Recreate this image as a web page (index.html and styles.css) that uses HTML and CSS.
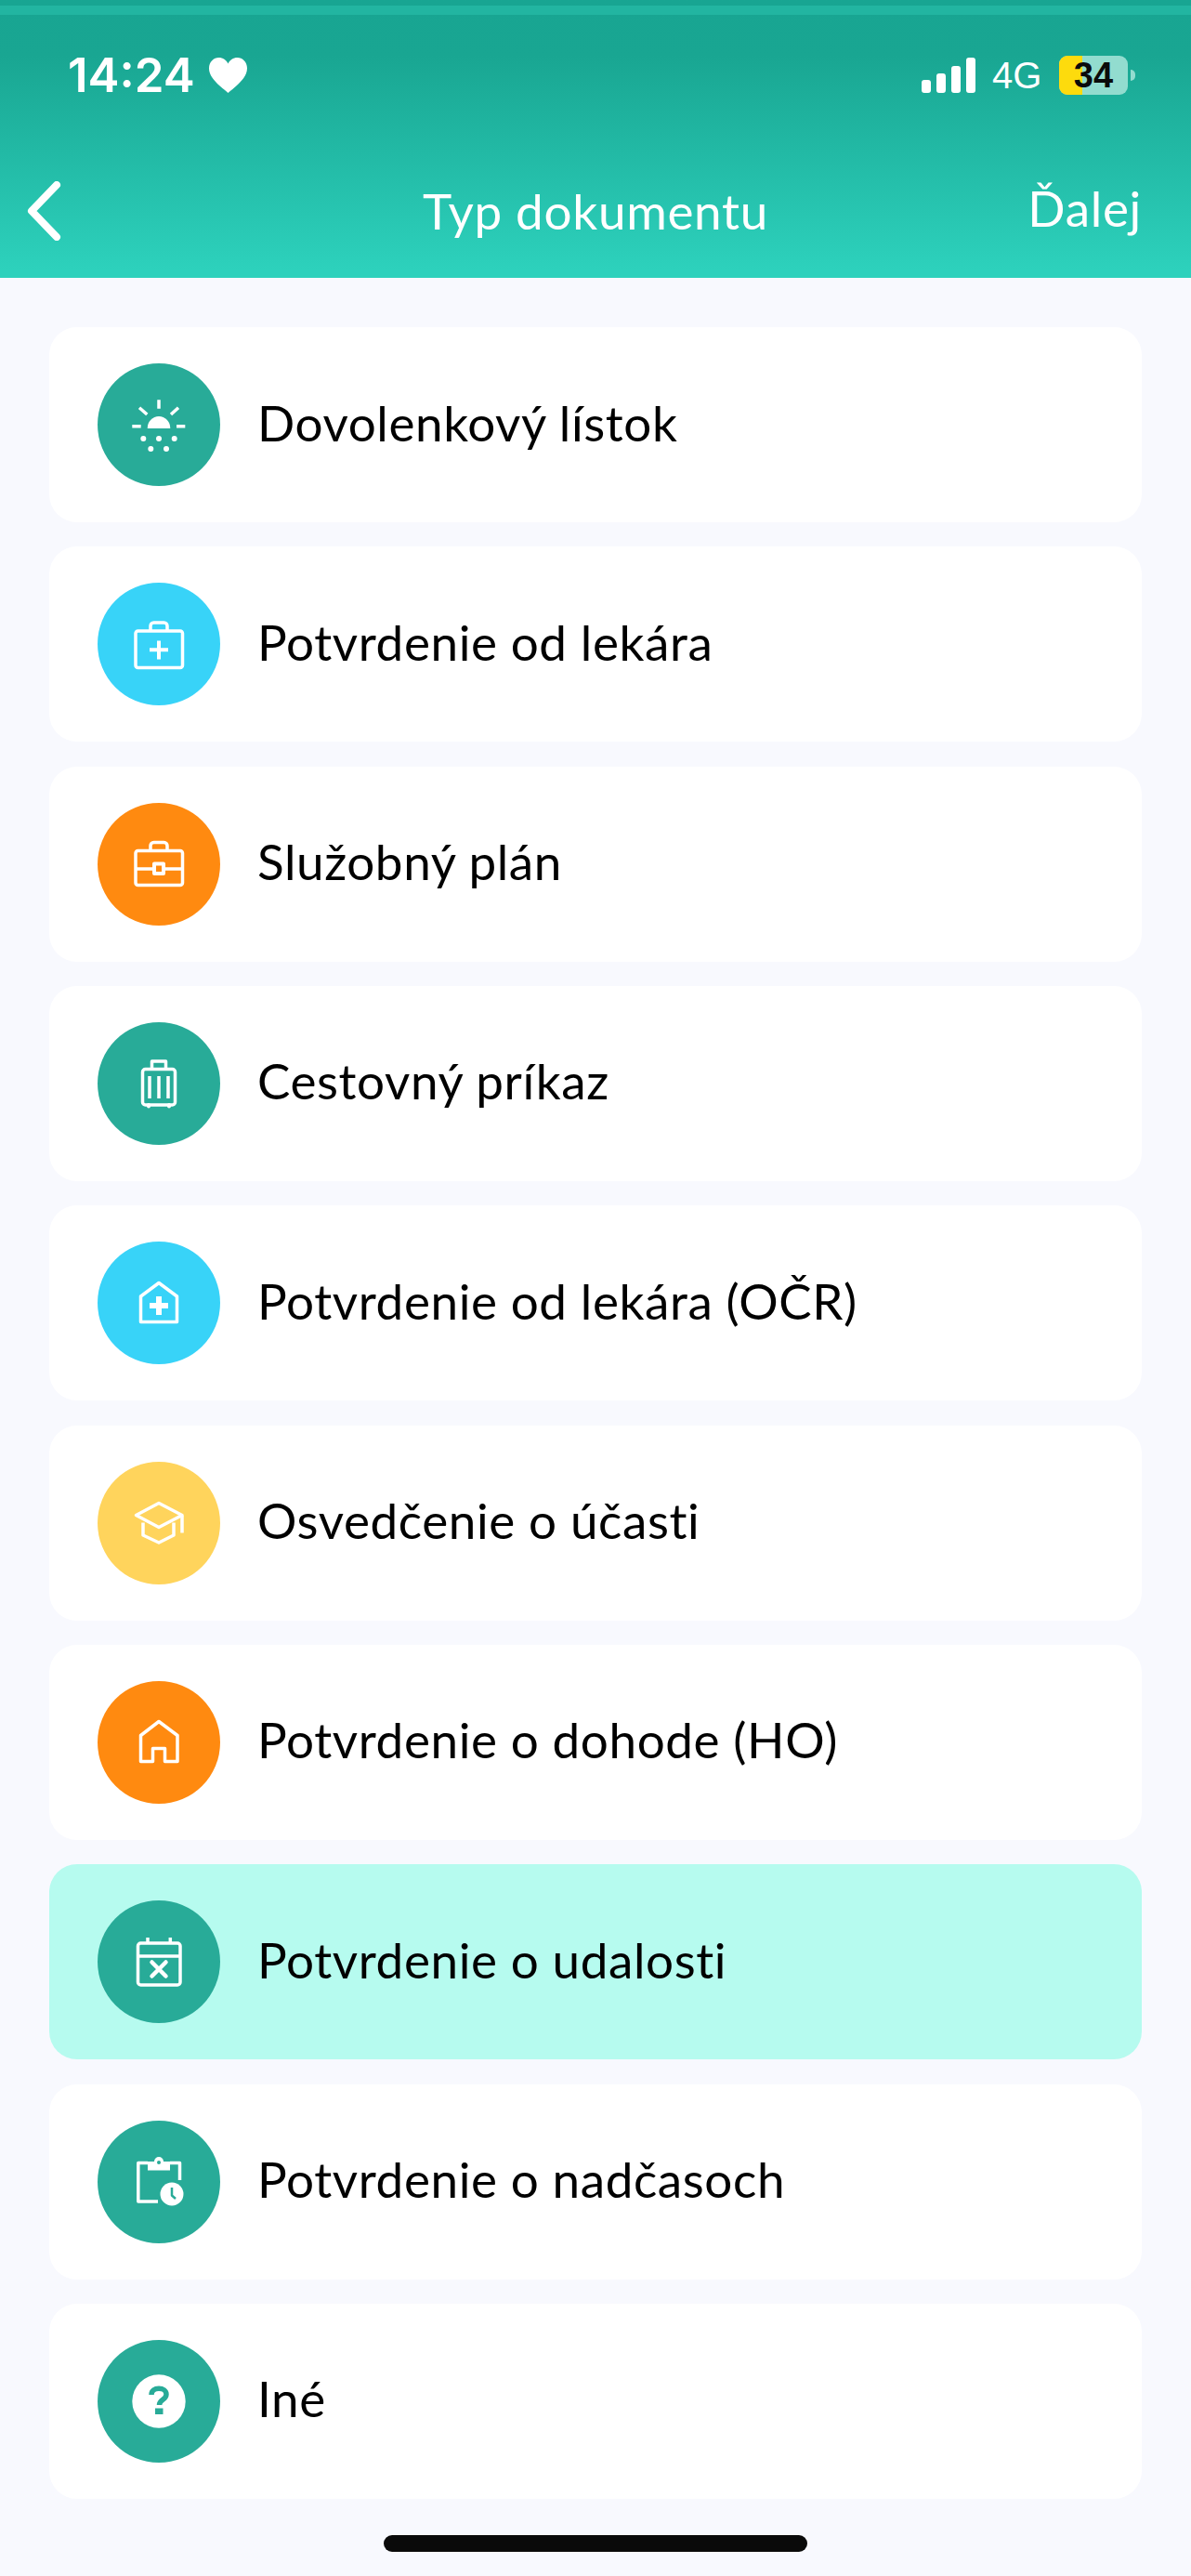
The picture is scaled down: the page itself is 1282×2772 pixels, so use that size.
FILE: index.html
```html
<!DOCTYPE html>
<html lang="sk">
<head>
    <meta charset="UTF-8">
    <title>Typ dokumentu</title>
    <link rel="stylesheet" href="styles.css">
</head>
<body>
    <header class="header">
        <div class="stripe"></div>
        <div class="status">
            <div class="status-left">
                <span class="time">14:24</span>
                <svg class="heart" viewBox="0 0 41 38"><path d="M20.500 38C14 32 0 23 0 11.500 0 4.500 5 0 10.500 0 15 0 18.500 2.500 20.500 6.500 22.500 2.500 26 0 30.500 0 36 0 41 4.500 41 11.500 41 23 27 32 20.500 38Z"/></svg>
            </div>
            <div class="status-right">
                <div class="signal">
                    <span class="bar bar-1"></span>
                    <span class="bar bar-2"></span>
                    <span class="bar bar-3"></span>
                    <span class="bar bar-4"></span>
                </div>
                <span class="network">4G</span>
                <div class="battery"><span class="battery-level"></span><span class="battery-text">34</span></div>
                <span class="battery-nub"></span>
            </div>
        </div>
        <nav class="nav">
            <svg class="back" viewBox="0 0 40 64"><path d="M33 4 6 32l27 28"/></svg>
            <span class="title">Typ dokumentu</span>
            <span class="next">Ďalej</span>
        </nav>
    </header>

    <main class="list">
        <div class="card">
            <div class="circle teal">
                <svg class="icon" viewBox="0 0 132 132">
                    <path d="M66 39.300V48.700M45 47.700l8.300 7.300M87 47.700 79 55M37.300 67.700h9.400M85 67.700h9.300"/>
                    <path class="solid" d="M53.700 70a12.300 13 0 0 1 24.600 0Z"/>
                    <circle class="solid" cx="49.300" cy="81" r="3"/><circle class="solid" cx="66" cy="81" r="3"/><circle class="solid" cx="82.700" cy="81" r="3"/>
                    <circle class="solid" cx="57.300" cy="92" r="3"/><circle class="solid" cx="74" cy="92" r="3"/>
                </svg>
            </div>
            <span class="label">Dovolenkový lístok</span>
        </div>
        <div class="card">
            <div class="circle blue">
                <svg class="icon" viewBox="0 0 132 132">
                    <rect x="41" y="52" width="50.500" height="39.500" rx="2.500"/>
                    <path d="M57 52v-5.500a3.500 3.500 0 0 1 3.500-3.500h11a3.500 3.500 0 0 1 3.500 3.500V52"/>
                    <path class="thick-plus" d="M56 72.300h20M66 62.500v20"/>
                </svg>
            </div>
            <span class="label">Potvrdenie od lekára</span>
        </div>
        <div class="card">
            <div class="circle orange">
                <svg class="icon" viewBox="0 0 132 132">
                    <rect x="41" y="51.500" width="50.500" height="37" rx="2.500"/>
                    <path d="M57 51.500v-5.500a3.500 3.500 0 0 1 3.500-3.500h11a3.500 3.500 0 0 1 3.500 3.500v5.500M41 71h18.500M72.500 71h19"/>
                    <rect class="clasp" x="61" y="65.500" width="10" height="10.500"/>
                </svg>
            </div>
            <span class="label">Služobný plán</span>
        </div>
        <div class="card">
            <div class="circle teal">
                <svg class="icon" viewBox="0 0 132 132">
                    <rect x="48.500" y="50.500" width="35" height="38.500" rx="3"/>
                    <path d="M58.500 50.500v-8.500h15v8.500M56 58v24M66 58v24M76 58v24"/>
                    <path class="wheels" d="M55 89v1.500M77 89v1.500"/>
                </svg>
            </div>
            <span class="label">Cestovný príkaz</span>
        </div>
        <div class="card">
            <div class="circle blue">
                <svg class="icon" viewBox="0 0 132 132">
                    <path d="M66 44.500 46.500 59v27.500h39V59Z"/>
                    <path class="thick" d="M56 69h20M66 59v20"/>
                </svg>
            </div>
            <span class="label">Potvrdenie od lekára (OČR)</span>
        </div>
        <div class="card">
            <div class="circle yellow">
                <svg class="icon" viewBox="0 0 132 132">
                    <path d="M66 44.500 41.500 57.500 66 70.500 91 57.500Z"/>
                    <path d="M49 65.500V79l17 8 16-8V65.500M91 58v18.500"/>
                </svg>
            </div>
            <span class="label">Osvedčenie o účasti</span>
        </div>
        <div class="card">
            <div class="circle orange">
                <svg class="icon" viewBox="0 0 132 132">
                    <path d="M66 43.500 46.500 58.500v28h13V72.500h13v14h13.500v-28Z"/>
                </svg>
            </div>
            <span class="label">Potvrdenie o dohode (HO)</span>
        </div>
        <div class="card selected">
            <div class="circle teal">
                <svg class="icon" viewBox="0 0 132 132">
                    <rect x="43.500" y="46" width="45.500" height="45" rx="3"/>
                    <path d="M54 40v7M78.300 40v7M43.500 60H89"/>
                    <path class="thick-x" d="M58.500 66.500l15 15M73.500 66.500l-15 15"/>
                </svg>
            </div>
            <span class="label">Potvrdenie o udalosti</span>
        </div>
        <div class="card">
            <div class="circle teal">
                <svg class="icon" viewBox="0 0 132 132">
                    <path d="M54 45.500H43.800V87H65M78 45.500H88.500V64"/>
                    <path class="solid" d="M54 44h7a5 5 0 0 1 10 0h7v9.500H54Z"/>
                    <circle class="hole" cx="66" cy="45" r="2"/>
                    <circle class="solid" cx="80" cy="79" r="12.500"/>
                    <path class="hand" d="M80 72v8.500l4 3.500"/>
                </svg>
            </div>
            <span class="label">Potvrdenie o nadčasoch</span>
        </div>
        <div class="card">
            <div class="circle teal">
                <svg class="icon" viewBox="0 0 132 132">
                    <circle class="solid" cx="66" cy="66" r="28.700"/>
                    <path class="mark" d="M58 59c0-4.500 3.500-6.700 8-6.700s8 2.400 8 6.200c0 6-7.500 5.500-7.500 11.500"/>
                    <rect class="mark-dot" x="62" y="73.500" width="8.500" height="6.500"/>
                </svg>
            </div>
            <span class="label">Iné</span>
        </div>
    </main>

    <div class="home-indicator"></div>
</body>
</html>
```

FILE: styles.css
```css
body {
    margin: 0;
    background: #f8f9fe;
    font-family: Lato, "Noto Sans", sans-serif;
    color: #000000;
}

/* hlavicka */
.header {
    position: relative;
    height: 299px;
    box-sizing: border-box;
    padding-top: 60px;
    background: linear-gradient(#18a592 0, #19a692 60px, #2dd1bc 290px);
    color: #ffffff;
}
.stripe {
    position: absolute;
    top: 6px;
    left: 0;
    right: 0;
    height: 10px;
    background: #22b5a1;
}
.status {
    display: flex;
    justify-content: space-between;
    align-items: center;
    height: 42px;
    padding: 0 60px 0 73px;
}
.status-left {
    display: flex;
    align-items: center;
    gap: 15px;
}
.time {
    font-family: Inter, sans-serif;
    font-size: 51px;
    font-weight: 600;
    line-height: 42px;
}
.heart {
    width: 41px;
    height: 38px;
    fill: #ffffff;
}
.status-right {
    display: flex;
    align-items: center;
}
.signal {
    display: flex;
    align-items: flex-end;
    gap: 6px;
    height: 38px;
}
.bar {
    width: 10px;
    background: #ffffff;
    border-radius: 3px;
}
.bar-1 { height: 14px; }
.bar-2 { height: 21px; }
.bar-3 { height: 29px; }
.bar-4 { height: 38px; }
.network {
    margin-left: 18px;
    width: 72px;
    font-family: "Liberation Sans", sans-serif;
    font-size: 40px;
    line-height: 42px;
}
.battery {
    position: relative;
    width: 74px;
    height: 42px;
    background: #92dccf;
    border-radius: 9px;
    overflow: hidden;
}
.battery-level {
    display: block;
    width: 25px;
    height: 100%;
    background: #fddb0d;
}
.battery-text {
    position: absolute;
    top: 0;
    left: 0;
    width: 100%;
    font-family: "Liberation Sans", sans-serif;
    font-size: 38px;
    font-weight: 700;
    line-height: 42px;
    text-align: center;
    color: #0a0a0a;
}
.battery-nub {
    width: 5px;
    height: 12px;
    margin-left: 3px;
    background: #92dccf;
    border-radius: 0 6px 6px 0;
}
.nav {
    display: grid;
    grid-template-columns: 1fr auto 1fr;
    align-items: center;
    height: 66px;
    margin-top: 92px;
    padding: 0 53px;
}
.back {
    width: 40px;
    height: 64px;
    margin-left: -25px;
    fill: none;
    stroke: #ffffff;
    stroke-width: 8;
    stroke-linecap: round;
    stroke-linejoin: round;
}
.title {
    font-size: 53px;
    letter-spacing: 0.7px;
    line-height: 66px;
}
.next {
    justify-self: end;
    font-size: 53px;
    letter-spacing: 0.7px;
    line-height: 66px;
    margin-top: -6px;
}

/* zoznam dokumentov */
.list {
    display: flex;
    flex-direction: column;
    gap: 26.33px;
    padding: 53px 53px 0;
}
.card {
    display: flex;
    align-items: center;
    gap: 40px;
    height: 210px;
    padding-left: 52px;
    background: #ffffff;
    border-radius: 30px;
}
.card.selected {
    background: #b6fbef;
}
.circle {
    flex: none;
    width: 132px;
    height: 132px;
    border-radius: 50%;
}
.teal { background: #28ab98; }
.blue { background: #38d3f8; }
.orange { background: #ff8a10; }
.yellow { background: #ffd45c; }
.label {
    font-size: 53px;
    letter-spacing: 0.6px;
    line-height: 60px;
    margin-top: -5px;
}
.icon {
    display: block;
    width: 100%;
    height: 100%;
    fill: none;
    stroke: #ffffff;
    stroke-width: 3.500;
    stroke-linejoin: round;
}
.icon .solid {
    fill: #ffffff;
    stroke: none;
}
.icon .thick {
    stroke-width: 6;
}
.icon .thick-plus {
    stroke-width: 4;
}
.icon .thick-x {
    stroke-width: 4.500;
    stroke-linecap: round;
}
.icon .clasp {
    stroke-width: 4;
}
.icon .wheels {
    stroke-width: 4;
    stroke-linecap: round;
}
.icon .hole {
    fill: #28ab98;
    stroke: none;
}
.icon .hand {
    stroke: #28ab98;
    stroke-width: 2.500;
}
.icon .mark {
    stroke: #28ab98;
    stroke-width: 5.500;
}
.icon .mark-dot {
    fill: #28ab98;
    stroke: none;
}

.home-indicator {
    width: 456px;
    height: 18px;
    margin: 39px auto 0;
    background: #0a0a0a;
    border-radius: 9px;
}
```
